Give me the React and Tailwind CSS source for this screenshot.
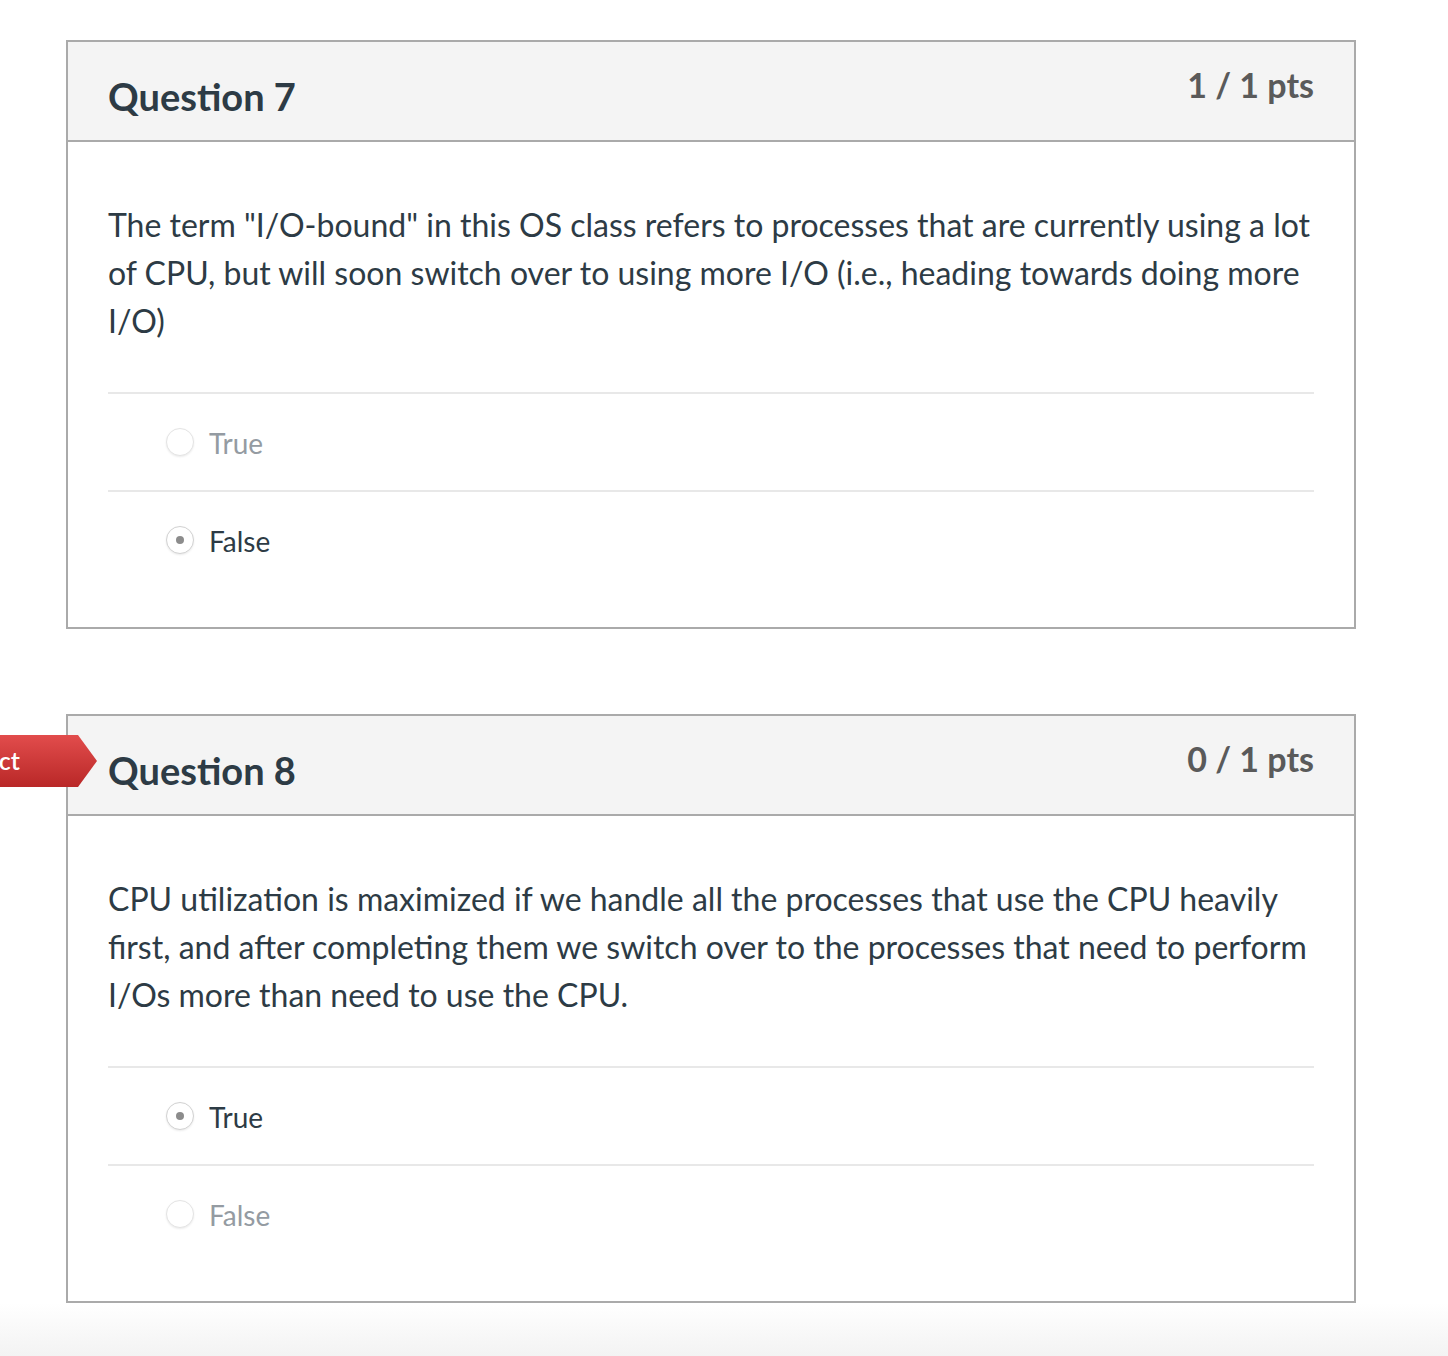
import React from "react";

const QUESTIONS = [
  {
    id: 7,
    score: "1 / 1 pts",
    text: 'The term "I/O-bound" in this OS class refers to processes that are currently using a lot of CPU, but will soon switch over to using more I/O (i.e., heading towards doing more I/O)',
    answers: ["True", "False"],
    selected: "False",
    incorrect: false,
  },
  {
    id: 8,
    score: "0 / 1 pts",
    text: "CPU utilization is maximized if we handle all the processes that use the CPU heavily first, and after completing them we switch over to the processes that need to perform I/Os more than need to use the CPU.",
    answers: ["True", "False"],
    selected: "True",
    incorrect: true,
  },
];

const Radio = ({ checked }) => (
  <span
    className={`flex h-[28px] w-[28px] shrink-0 items-center justify-center rounded-full border bg-white shadow-[0_1px_2px_rgba(0,0,0,0.08)] ${
      checked ? "border-[#d2d2d2]" : "border-[#e4e4e4]"
    }`}
  >
    {checked ? <span className="h-[8px] w-[8px] rounded-full bg-[#8c8c8c]" /> : null}
  </span>
);

const AnswerRow = ({ label, checked }) => (
  <div className="flex h-[98px] items-center border-t-2 border-[#e8e8e8] pl-[58px]">
    <Radio checked={checked} />
    <span
      className={`ml-[15px] mt-[2px] text-[28px] leading-none ${checked ? "text-[#2d3b45]" : "text-[#949ba2]"}`}
    >
      {label}
    </span>
  </div>
);

const IncorrectFlag = () => (
  <div className="absolute left-[-68px] top-[19px] h-[52px] w-[97px] [clip-path:polygon(0_0,78px_0,97px_50%,78px_100%,0_100%)] bg-gradient-to-b from-[#e24c4c] to-[#b92727]">
    <div className="flex h-full items-center justify-end pr-[77px] text-[25px] font-semibold text-white whitespace-nowrap">
      Incorrect
    </div>
  </div>
);

const QuestionCard = ({ question }) => (
  <section className="relative w-[1290px] border-2 border-[#aaaaaa] bg-white">
    {question.incorrect ? <IncorrectFlag /> : null}
    <header className="flex h-[100px] items-start justify-between border-b-2 border-[#aaaaaa] bg-[#f4f4f4] px-10">
      <h2 className="mt-[32px] text-[38px] font-bold leading-[44px] text-[#2d3b45]">
        Question {question.id}
      </h2>
      <span className="mt-[23px] text-[34px] font-bold leading-[40px] text-[#5a5a5a]">
        {question.score}
      </span>
    </header>
    <div className="px-10 pb-[39px] pt-[59px]">
      <p className="text-[32px] leading-[48px] text-[#2d3b45]">{question.text}</p>
      <div className="mt-[47px]">
        {question.answers.map((answer) => (
          <AnswerRow key={answer} label={answer} checked={answer === question.selected} />
        ))}
      </div>
    </div>
  </section>
);

export default function App() {
  return (
    <div className="relative min-h-[1356px] overflow-hidden bg-white font-['Lato','Liberation_Sans',sans-serif]">
      <div className="flex flex-col gap-[85px] pl-[66px] pt-[40px]">
        {QUESTIONS.map((question) => (
          <QuestionCard key={question.id} question={question} />
        ))}
      </div>
      <div className="h-[53px] bg-gradient-to-b from-white to-[#f3f3f3]" />
    </div>
  );
}
